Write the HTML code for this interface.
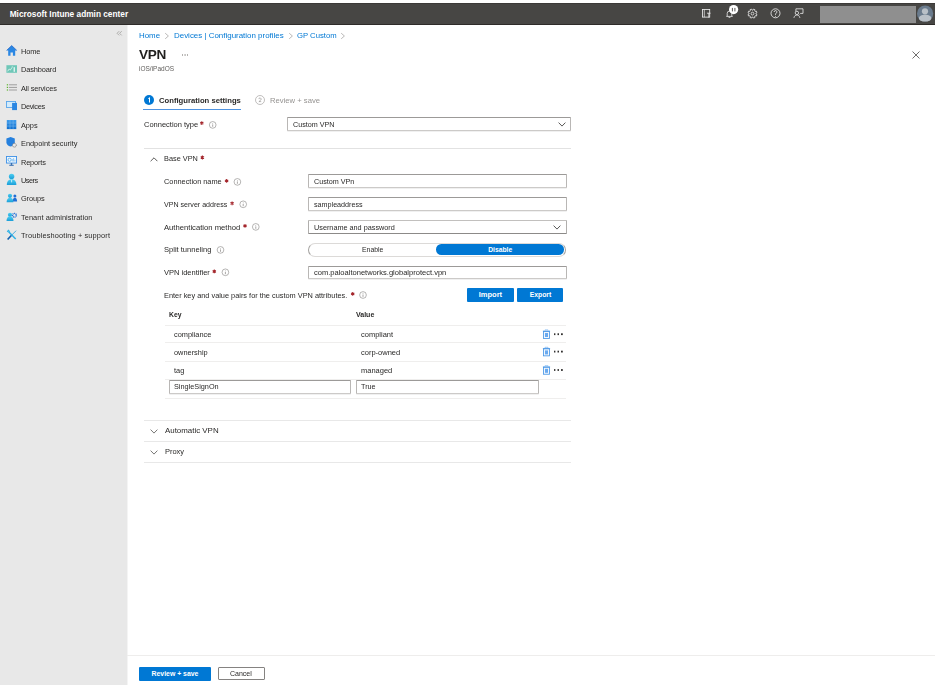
<!DOCTYPE html>
<html><head><meta charset="utf-8"><style>
html,body{margin:0;padding:0;width:940px;height:685px;overflow:hidden;background:#fff;font-family:"Liberation Sans", sans-serif;}
.t{position:absolute;white-space:nowrap;will-change:transform;}
.r{position:absolute;box-sizing:border-box;}
</style></head><body>
<div class="r" style="left:0.00px;top:3.00px;width:935.00px;height:22.00px;background:#474644;"></div>
<div class="r" style="left:0.00px;top:3.00px;width:935.00px;height:1.00px;background:#3c3a38;"></div>
<div class="r" style="left:0.00px;top:24.00px;width:935.00px;height:1.00px;background:#2e2b29;"></div>
<div class="t" style="left:9.70px;top:9.77px;font-size:8.3px;line-height:8.3px;color:#ffffff;font-weight:bold;will-change:auto;">Microsoft Intune admin center</div>
<svg class="r" style="left:690.00px;top:3.00px" width="120" height="22" viewBox="690 3 120 22"><rect x="702.5" y="9.5" width="7.2" height="7.6" fill="none" stroke="#ececec" stroke-width="0.85"/><path d="M704.3 9.5v7.6" stroke="#ececec" stroke-width="0.7"/><path d="M707 13.2h3.6M708.8 13.2v4.4" fill="none" stroke="#ececec" stroke-width="0.8"/><path d="M726.3 16.4h6.4M727.2 16.4v-3a2.3 2.3 0 0 1 4.6 0v3M728.6 17.4h1.8" fill="none" stroke="#ececec" stroke-width="0.8"/><circle cx="733.6" cy="9.6" r="4.6" fill="#ffffff"/><path d="M732.4 7.9v3.5M734.9 7.9v3.5" stroke="#5a5856" stroke-width="1"/><path d="M755.89 13.91 L756.99 14.62 L756.39 16.05 L755.12 15.77 L754.67 16.22 L754.95 17.49 L753.52 18.09 L752.81 16.99 L752.19 16.99 L751.48 18.09 L750.05 17.49 L750.33 16.22 L749.88 15.77 L748.61 16.05 L748.01 14.62 L749.11 13.91 L749.11 13.29 L748.01 12.58 L748.61 11.15 L749.88 11.43 L750.33 10.98 L750.05 9.71 L751.48 9.11 L752.19 10.21 L752.81 10.21 L753.52 9.11 L754.95 9.71 L754.67 10.98 L755.12 11.43 L756.39 11.15 L756.99 12.58 L755.89 13.29Z" fill="none" stroke="#ececec" stroke-width="0.8"/><circle cx="752.5" cy="13.6" r="1.4" fill="none" stroke="#ececec" stroke-width="0.8"/><circle cx="775.5" cy="13.3" r="4.5" fill="none" stroke="#ececec" stroke-width="0.85"/><path d="M774.1 12.0a1.4 1.4 0 1 1 1.9 1.3c-.4.2-.5.4-.5.8v0.8" fill="none" stroke="#ececec" stroke-width="0.85"/><circle cx="775.5" cy="16.2" r="0.5" fill="#ececec"/><path d="M795.9 11.6V8.8h7.1v4.6h-2.4l-1 1" fill="none" stroke="#ececec" stroke-width="0.8"/><circle cx="796.9" cy="12.9" r="1.7" fill="#474644" stroke="#ececec" stroke-width="0.8"/><path d="M793.9 17.9c.4-1.9 1.5-2.9 3-2.9s2.6 1 3 2.9" fill="none" stroke="#ececec" stroke-width="0.8"/></svg>
<div class="r" style="left:820.00px;top:5.80px;width:96.00px;height:17.40px;background:#8f8f8f;"></div>
<svg class="r" style="left:915.00px;top:3.00px" width="20" height="22" viewBox="915 3 20 22"><circle cx="925.1" cy="13.5" r="8.1" fill="#6a7b8d"/><circle cx="925" cy="11.3" r="3.1" fill="#b9c0c7"/><path d="M918.9 18.2c0-2.1 2.6-3.5 6.2-3.5s6.2 1.4 6.2 3.5c0 1.9-2.6 3.4-6.2 3.4s-6.2-1.5-6.2-3.4z" fill="#b9c0c7"/></svg>
<div class="r" style="left:0.00px;top:25.00px;width:127.00px;height:660.00px;background:#e8e8e8;"></div>
<div class="r" style="left:127.00px;top:25.00px;width:1.00px;height:660.00px;background:#f4f4f4;"></div>
<svg class="r" style="left:114.00px;top:28.00px" width="12" height="10" viewBox="114 28 12 10"><path d="M119.2 31.2l-2.1 2.1 2.1 2.1M121.7 31.2l-2.1 2.1 2.1 2.1" fill="none" stroke="#9a9896" stroke-width="0.75"/></svg>
<div class="t" style="left:20.70px;top:47.74px;font-size:7.4px;line-height:7.4px;color:#2a2928;font-weight:normal;letter-spacing:-0.146px;">Home</div>
<div class="t" style="left:20.70px;top:66.20px;font-size:7.4px;line-height:7.4px;color:#2a2928;font-weight:normal;letter-spacing:-0.113px;">Dashboard</div>
<div class="t" style="left:20.70px;top:84.66px;font-size:7.4px;line-height:7.4px;color:#2a2928;font-weight:normal;letter-spacing:-0.138px;">All services</div>
<div class="t" style="left:20.70px;top:103.12px;font-size:7.4px;line-height:7.4px;color:#2a2928;font-weight:normal;letter-spacing:-0.353px;">Devices</div>
<div class="t" style="left:20.70px;top:121.58px;font-size:7.4px;line-height:7.4px;color:#2a2928;font-weight:normal;letter-spacing:-0.089px;">Apps</div>
<div class="t" style="left:20.70px;top:140.04px;font-size:7.4px;line-height:7.4px;color:#2a2928;font-weight:normal;letter-spacing:-0.017px;">Endpoint security</div>
<div class="t" style="left:20.70px;top:158.50px;font-size:7.4px;line-height:7.4px;color:#2a2928;font-weight:normal;letter-spacing:-0.168px;">Reports</div>
<div class="t" style="left:20.70px;top:176.96px;font-size:7.4px;line-height:7.4px;color:#2a2928;font-weight:normal;letter-spacing:-0.506px;">Users</div>
<div class="t" style="left:20.70px;top:195.42px;font-size:7.4px;line-height:7.4px;color:#2a2928;font-weight:normal;letter-spacing:-0.133px;">Groups</div>
<div class="t" style="left:20.70px;top:213.88px;font-size:7.4px;line-height:7.4px;color:#2a2928;font-weight:normal;letter-spacing:0.058px;">Tenant administration</div>
<div class="t" style="left:20.70px;top:232.34px;font-size:7.4px;line-height:7.4px;color:#2a2928;font-weight:normal;letter-spacing:0.133px;">Troubleshooting + support</div>
<svg class="r" style="left:0.00px;top:40.00px" width="20" height="210" viewBox="0 40 20 210"><path d="M11.7 45.6L6.6 50.4h1.6v5.4h2.3v-3.3h2.4v3.3h2.3v-5.4h1.6z" fill="#2b87e3"/><path d="M6.6 50.4L11.7 45.6 16.8 50.4" fill="none" stroke="#1c62c4" stroke-width="0.7"/><rect x="6.4" y="65.2" width="10.6" height="7.6" fill="#6fc7b8"/><path d="M7.6 71.3l1.6-2.3 1.2 1 1.6-2.6" fill="none" stroke="#e9f7f4" stroke-width="0.8"/><rect x="13.6" y="67.2" width="1.3" height="4.6" fill="#e9f7f4"/><rect x="11.8" y="66.4" width="0.9" height="0.9" fill="#e9f7f4"/><rect x="8.8" y="84.3" width="8.2" height="1" fill="#9e9e9e"/><rect x="8.8" y="86.9" width="8.2" height="1" fill="#9e9e9e"/><rect x="8.8" y="89.5" width="8.2" height="1" fill="#9e9e9e"/><rect x="6.8" y="84.2" width="1.2" height="1.2" fill="#5cb82e"/><rect x="6.8" y="86.8" width="1.2" height="1.2" fill="#5cb82e"/><rect x="6.8" y="89.4" width="1.2" height="1.2" fill="#5cb82e"/><rect x="6.45" y="101.45" width="9.1" height="6.1" fill="#d3ebfb" stroke="#58a6ec" stroke-width="0.9"/><rect x="12.1" y="102.9" width="4.9" height="7.2" fill="#2a86e2"/><defs><linearGradient id="ga" x1="0" y1="0" x2="0" y2="1"><stop offset="0" stop-color="#3f9cec"/><stop offset="1" stop-color="#0f6fcf"/></linearGradient><linearGradient id="gu" x1="0" y1="0" x2="0" y2="1"><stop offset="0" stop-color="#4fd0f2"/><stop offset="1" stop-color="#1b9ed8"/></linearGradient></defs><rect x="6.8" y="120" width="9.5" height="9.1" fill="url(#ga)"/><path d="M9.97 120v9.1M13.13 120v9.1M6.8 123.03h9.5M6.8 126.07h9.5" stroke="#8cc2f0" stroke-width="0.45"/><path d="M10.6 137.1L6.4 138.6v3.6c0 2.4 1.7 3.8 4.2 4.4 2.5-.6 4.2-2 4.2-4.4v-3.6z" fill="#2580de"/><circle cx="14.4" cy="145.2" r="1.9" fill="#e8e8e8" stroke="#767676" stroke-width="0.9" stroke-dasharray="0.9 0.4"/><rect x="6.45" y="156.45" width="10.1" height="6.6" fill="#eef7fd" stroke="#3d90e6" stroke-width="0.9"/><circle cx="9.6" cy="159.8" r="1.6" fill="none" stroke="#5aaef0" stroke-width="0.9"/><path d="M12.3 161.5v-2.5M13.6 161.5v-3.4M14.9 161.5v-1.8" stroke="#7cbdf2" stroke-width="0.8"/><path d="M11.5 163.2v1.6" stroke="#1b5ca8" stroke-width="1.4"/><path d="M9.3 165.3h4.4" stroke="#1b5ca8" stroke-width="0.9"/><circle cx="11.6" cy="176.4" r="2.7" fill="url(#gu)"/><path d="M6.8 185c0-3.6 2.1-5.7 4.8-5.7s4.8 2.1 4.8 5.7z" fill="url(#gu)"/><path d="M11.6 179.8v2.6" stroke="#e6f6fc" stroke-width="0.8"/><circle cx="17.2" cy="196" r="0" fill="none"/><circle cx="14.9" cy="195.9" r="1.5" fill="#1f6fd6"/><path d="M12.6 201.6c0-2.4 1-3.9 2.3-3.9s2.2 1.5 2.2 3.9z" fill="#1f6fd6"/><circle cx="10" cy="195.8" r="2.1" fill="url(#gu)"/><path d="M6.6 202.2c0-2.8 1.5-4.4 3.4-4.4s3.4 1.6 3.4 4.4z" fill="url(#gu)"/><circle cx="14.4" cy="215.3" r="1.9" fill="none" stroke="#2070d8" stroke-width="1.4" stroke-dasharray="1 0.55"/><circle cx="10" cy="214.8" r="2.1" fill="url(#gu)"/><path d="M6.5 220.9c0-2.8 1.6-4.6 3.5-4.6s3.5 1.8 3.5 4.6z" fill="url(#gu)"/><path d="M8.4 231.4l7.3 7.6" stroke="#2fb2e6" stroke-width="1.5"/><path d="M7.2 231.8l1.2-1.4 1.4 1.2" fill="none" stroke="#2fb2e6" stroke-width="1.1"/><path d="M16.1 230.7l-5 5" stroke="#35a6df" stroke-width="0.9"/><path d="M11.3 235.5L7.6 239.5" stroke="#1160b0" stroke-width="1.7"/></svg>
<div class="t" style="left:138.90px;top:32.11px;font-size:7.9px;line-height:7.9px;color:#0078d4;font-weight:normal;">Home</div>
<div class="t" style="left:173.50px;top:32.07px;font-size:7.95px;line-height:7.95px;color:#0078d4;font-weight:normal;">Devices | Configuration profiles</div>
<div class="t" style="left:296.60px;top:32.28px;font-size:7.7px;line-height:7.7px;color:#0078d4;font-weight:normal;">GP Custom</div>
<svg class="r" style="left:164.30px;top:32.00px" width="6" height="8" viewBox="0 0 6 8"><path d="M1.2 1.2L4.4 4 1.2 6.8" fill="none" stroke="#a8a6a4" stroke-width="0.8"/></svg>
<svg class="r" style="left:288.30px;top:32.00px" width="6" height="8" viewBox="0 0 6 8"><path d="M1.2 1.2L4.4 4 1.2 6.8" fill="none" stroke="#a8a6a4" stroke-width="0.8"/></svg>
<svg class="r" style="left:340.30px;top:32.00px" width="6" height="8" viewBox="0 0 6 8"><path d="M1.2 1.2L4.4 4 1.2 6.8" fill="none" stroke="#a8a6a4" stroke-width="0.8"/></svg>
<div class="t" style="left:139.20px;top:48.09px;font-size:13.6px;line-height:13.6px;color:#201f1e;font-weight:bold;letter-spacing:-0.3px;">VPN</div>
<svg class="r" style="left:181.00px;top:53.00px" width="8" height="4" viewBox="0 0 8 4"><rect x="1" y="1" width="1" height="2" fill="#b4b2b0"/><rect x="3.3" y="1" width="1.6" height="2" fill="#c4c2c0"/><rect x="6" y="1" width="1" height="2" fill="#b4b2b0"/></svg>
<div class="t" style="left:139.00px;top:65.50px;font-size:6.5px;line-height:6.5px;color:#605e5c;font-weight:normal;">iOS/iPadOS</div>
<svg class="r" style="left:143.60px;top:95.30px" width="10" height="10" viewBox="0 0 10 10"><circle cx="5" cy="5" r="5" fill="#0078d4"/><path d="M4.3 3.6l1.2-.9v4.8" fill="none" stroke="#fff" stroke-width="1"/></svg>
<div class="t" style="left:158.80px;top:96.50px;font-size:7.68px;line-height:7.68px;color:#2a2928;font-weight:bold;">Configuration settings</div>
<div class="r" style="left:143.00px;top:108.70px;width:98.00px;height:1.50px;background:#4f93e0;"></div>
<svg class="r" style="left:254.70px;top:95.30px" width="10" height="10" viewBox="0 0 10 10"><circle cx="5" cy="5" r="4.5" fill="none" stroke="#a6a4a2" stroke-width="0.7"/><path d="M3.9 4.1a1.15 1.15 0 1 1 1.9 .9L3.9 6.6h2.3" fill="none" stroke="#8d8b89" stroke-width="0.6"/></svg>
<div class="t" style="left:270.00px;top:96.82px;font-size:7.66px;line-height:7.66px;color:#959391;font-weight:normal;">Review + save</div>
<div class="t" style="left:143.50px;top:120.95px;font-size:7.5px;line-height:7.5px;color:#2a2928;font-weight:normal;">Connection type</div>
<div class="r" style="left:287.20px;top:117.20px;width:283.60px;height:13.80px;border:1px solid #b9b7b5;border-top-color:#9c9a98;border-bottom-color:#cccac8;border-radius:1px;background:#fff;box-shadow:0 0.8px 0 #ececec;"></div>
<div class="t" style="left:292.80px;top:122.22px;font-size:7.18px;line-height:7.18px;color:#2a2928;font-weight:normal;">Custom VPN</div>
<svg class="r" style="left:558.00px;top:121.80px" width="8" height="5" viewBox="0 0 8 5"><path d="M0.6 0.6L4 4.1 7.4 0.6" fill="none" stroke="#3b3a39" stroke-width="0.85"/></svg>
<div class="r" style="left:143.50px;top:148.00px;width:427.50px;height:1.00px;background:#e2e2e2;"></div>
<svg class="r" style="left:150.00px;top:157.00px" width="8" height="5" viewBox="0 0 8 5"><path d="M0.6 4.2L4 0.8 7.4 4.2" fill="none" stroke="#323130" stroke-width="0.8"/></svg>
<div class="t" style="left:164.40px;top:155.00px;font-size:7.33px;line-height:7.33px;color:#2a2928;font-weight:normal;">Base VPN</div>
<div class="t" style="left:164.40px;top:177.76px;font-size:7.37px;line-height:7.37px;color:#2a2928;font-weight:normal;">Connection name</div>
<div class="r" style="left:308.20px;top:174.30px;width:258.60px;height:14.00px;border:1px solid #b9b7b5;border-top-color:#9c9a98;border-bottom-color:#cccac8;border-radius:1px;background:#fff;box-shadow:0 0.8px 0 #ececec;"></div>
<div class="t" style="left:313.50px;top:178.11px;font-size:7.2px;line-height:7.2px;color:#2a2928;font-weight:normal;">Custom VPn</div>
<div class="t" style="left:164.40px;top:202.00px;font-size:7.09px;line-height:7.09px;color:#2a2928;font-weight:normal;">VPN server address</div>
<div class="r" style="left:308.20px;top:197.40px;width:258.60px;height:14.00px;border:1px solid #b9b7b5;border-top-color:#9c9a98;border-bottom-color:#cccac8;border-radius:1px;background:#fff;box-shadow:0 0.8px 0 #ececec;"></div>
<div class="t" style="left:313.50px;top:201.92px;font-size:7.18px;line-height:7.18px;color:#2a2928;font-weight:normal;">sampleaddress</div>
<div class="t" style="left:164.40px;top:223.52px;font-size:7.66px;line-height:7.66px;color:#2a2928;font-weight:normal;">Authentication method</div>
<div class="r" style="left:308.20px;top:220.30px;width:258.40px;height:13.60px;border:1px solid #b0aeac;border-top-color:#c2c0be;border-bottom-color:#8c8a88;border-radius:1px;background:#fff;"></div>
<div class="t" style="left:313.60px;top:223.84px;font-size:7.28px;line-height:7.28px;color:#2a2928;font-weight:normal;">Username and password</div>
<svg class="r" style="left:553.20px;top:224.70px" width="8" height="5" viewBox="0 0 8 5"><path d="M0.6 0.6L4 4.1 7.4 0.6" fill="none" stroke="#3b3a39" stroke-width="0.85"/></svg>
<div class="t" style="left:164.40px;top:246.40px;font-size:7.56px;line-height:7.56px;color:#2a2928;font-weight:normal;">Split tunneling</div>
<div class="r" style="left:308.00px;top:242.80px;width:257.80px;height:14.10px;border:1.2px solid #dcdad8;border-left-color:#a3a19f;border-right-color:#a3a19f;border-radius:7.2px;background:#fff;"></div>
<div class="r" style="left:436.40px;top:244.20px;width:127.80px;height:10.50px;background:#0078d4;border-radius:5.3px;"></div>
<div class="t" style="left:361.90px;top:246.58px;font-size:6.87px;line-height:6.87px;color:#2a2928;font-weight:normal;">Enable</div>
<div class="t" style="left:488.20px;top:246.89px;font-size:6.75px;line-height:6.75px;color:#fff;font-weight:bold;will-change:auto;">Disable</div>
<div class="t" style="left:164.40px;top:268.74px;font-size:7.51px;line-height:7.51px;color:#2a2928;font-weight:normal;">VPN identifier</div>
<div class="r" style="left:308.20px;top:265.50px;width:258.40px;height:13.30px;border:1px solid #b9b7b5;border-top-color:#9c9a98;border-bottom-color:#cccac8;border-radius:1px;background:#fff;box-shadow:0 0.8px 0 #ececec;"></div>
<div class="t" style="left:313.60px;top:269.12px;font-size:7.54px;line-height:7.54px;color:#2a2928;font-weight:normal;">com.paloaltonetworks.globalprotect.vpn</div>
<div class="t" style="left:164.40px;top:291.56px;font-size:7.37px;line-height:7.37px;color:#2a2928;font-weight:normal;">Enter key and value pairs for the custom VPN attributes.</div>
<div class="r" style="left:466.70px;top:288.10px;width:47.60px;height:13.60px;background:#0078d4;border-radius:1px;"></div>
<div class="r" style="left:517.30px;top:288.10px;width:46.10px;height:13.60px;background:#0078d4;border-radius:1px;"></div>
<div class="t" style="left:478.70px;top:291.23px;font-size:7.52px;line-height:7.52px;color:#fff;font-weight:bold;will-change:auto;">Import</div>
<div class="t" style="left:529.70px;top:291.83px;font-size:6.82px;line-height:6.82px;color:#fff;font-weight:bold;will-change:auto;">Export</div>
<div class="t" style="left:169.40px;top:311.84px;font-size:6.8px;line-height:6.8px;color:#2a2928;font-weight:bold;">Key</div>
<div class="t" style="left:356.20px;top:310.97px;font-size:7.0px;line-height:7.0px;color:#2a2928;font-weight:bold;">Value</div>
<div class="r" style="left:164.60px;top:325.00px;width:401.40px;height:1.00px;background:#efeeed;"></div>
<div class="r" style="left:164.60px;top:342.00px;width:401.40px;height:1.00px;background:#efeeed;"></div>
<div class="r" style="left:164.60px;top:361.00px;width:401.40px;height:1.00px;background:#efeeed;"></div>
<div class="r" style="left:164.60px;top:379.00px;width:401.40px;height:1.00px;background:#efeeed;"></div>
<div class="r" style="left:164.60px;top:398.00px;width:401.40px;height:1.00px;background:#efeeed;"></div>
<div class="t" style="left:173.80px;top:330.74px;font-size:7.39px;line-height:7.39px;color:#2a2928;font-weight:normal;">compliance</div>
<div class="t" style="left:361.00px;top:330.65px;font-size:7.5px;line-height:7.5px;color:#2a2928;font-weight:normal;">compliant</div>
<div class="t" style="left:173.80px;top:348.74px;font-size:7.39px;line-height:7.39px;color:#2a2928;font-weight:normal;">ownership</div>
<div class="t" style="left:361.00px;top:348.65px;font-size:7.5px;line-height:7.5px;color:#2a2928;font-weight:normal;">corp-owned</div>
<div class="t" style="left:173.80px;top:367.34px;font-size:7.39px;line-height:7.39px;color:#2a2928;font-weight:normal;">tag</div>
<div class="t" style="left:361.00px;top:367.25px;font-size:7.5px;line-height:7.5px;color:#2a2928;font-weight:normal;">managed</div>
<svg class="r" style="left:540.00px;top:320.00px" width="30" height="60" viewBox="540 320 30 60"><g transform="translate(542 329.00)"><rect x="1.45" y="2.45" width="6.1" height="7" fill="#f2f7fd" stroke="#4a97e6" stroke-width="0.85"/><rect x="3" y="4" width="3" height="4" fill="#6aaaf0"/><path d="M0.9 2.1h7.2" stroke="#4a97e6" stroke-width="0.8"/><path d="M3 1.6V0.9h3v.7" fill="none" stroke="#7ab4f0" stroke-width="0.7"/></g><g transform="translate(553 332.10)"><rect x="1" y="1.2" width="1.4" height="1.8" fill="#323130"/><rect x="4.5" y="1.2" width="1.5" height="1.8" fill="#323130"/><rect x="8" y="1.2" width="1.8" height="1.8" fill="#323130"/></g><g transform="translate(542 346.40)"><rect x="1.45" y="2.45" width="6.1" height="7" fill="#f2f7fd" stroke="#4a97e6" stroke-width="0.85"/><rect x="3" y="4" width="3" height="4" fill="#6aaaf0"/><path d="M0.9 2.1h7.2" stroke="#4a97e6" stroke-width="0.8"/><path d="M3 1.6V0.9h3v.7" fill="none" stroke="#7ab4f0" stroke-width="0.7"/></g><g transform="translate(553 349.50)"><rect x="1" y="1.2" width="1.4" height="1.8" fill="#323130"/><rect x="4.5" y="1.2" width="1.5" height="1.8" fill="#323130"/><rect x="8" y="1.2" width="1.8" height="1.8" fill="#323130"/></g><g transform="translate(542 364.80)"><rect x="1.45" y="2.45" width="6.1" height="7" fill="#f2f7fd" stroke="#4a97e6" stroke-width="0.85"/><rect x="3" y="4" width="3" height="4" fill="#6aaaf0"/><path d="M0.9 2.1h7.2" stroke="#4a97e6" stroke-width="0.8"/><path d="M3 1.6V0.9h3v.7" fill="none" stroke="#7ab4f0" stroke-width="0.7"/></g><g transform="translate(553 367.90)"><rect x="1" y="1.2" width="1.4" height="1.8" fill="#323130"/><rect x="4.5" y="1.2" width="1.5" height="1.8" fill="#323130"/><rect x="8" y="1.2" width="1.8" height="1.8" fill="#323130"/></g></svg>
<div class="r" style="left:169.00px;top:380.00px;width:182.40px;height:13.60px;border:1px solid #b9b7b5;border-top-color:#9c9a98;border-bottom-color:#cccac8;border-radius:1px;background:#fff;box-shadow:0 0.8px 0 #ececec;"></div>
<div class="t" style="left:173.80px;top:383.21px;font-size:7.31px;line-height:7.31px;color:#2a2928;font-weight:normal;">SingleSignOn</div>
<div class="r" style="left:356.20px;top:380.00px;width:182.50px;height:13.60px;border:1px solid #b9b7b5;border-top-color:#9c9a98;border-bottom-color:#cccac8;border-radius:1px;background:#fff;box-shadow:0 0.8px 0 #ececec;"></div>
<div class="t" style="left:361.40px;top:383.28px;font-size:7.23px;line-height:7.23px;color:#2a2928;font-weight:normal;">True</div>
<div class="r" style="left:143.70px;top:420.00px;width:427.30px;height:1.00px;background:#e8e8e8;"></div>
<svg class="r" style="left:150.00px;top:428.50px" width="8" height="5" viewBox="0 0 8 5"><path d="M0.6 0.6L4 4.1 7.4 0.6" fill="none" stroke="#605e5c" stroke-width="0.85"/></svg>
<div class="t" style="left:164.50px;top:427.00px;font-size:7.92px;line-height:7.92px;color:#2a2928;font-weight:normal;">Automatic VPN</div>
<div class="r" style="left:143.70px;top:441.00px;width:427.30px;height:1.00px;background:#e8e8e8;"></div>
<svg class="r" style="left:150.00px;top:449.50px" width="8" height="5" viewBox="0 0 8 5"><path d="M0.6 0.6L4 4.1 7.4 0.6" fill="none" stroke="#605e5c" stroke-width="0.85"/></svg>
<div class="t" style="left:164.50px;top:447.78px;font-size:7.47px;line-height:7.47px;color:#2a2928;font-weight:normal;">Proxy</div>
<div class="r" style="left:143.70px;top:462.00px;width:427.30px;height:1.00px;background:#e8e8e8;"></div>
<svg class="r" style="left:912.00px;top:51.00px" width="8" height="8" viewBox="0 0 8 8"><path d="M0.5 0.5l7 7M7.5 0.5l-7 7" stroke="#605e5c" stroke-width="0.9"/></svg>
<div class="r" style="left:127.00px;top:655.00px;width:808.00px;height:1.00px;background:#eeedec;"></div>
<div class="r" style="left:139.10px;top:667.00px;width:72.30px;height:13.60px;background:#0078d4;border-radius:1px;"></div>
<div class="t" style="left:151.50px;top:670.56px;font-size:6.9px;line-height:6.9px;color:#fff;font-weight:bold;will-change:auto;">Review + save</div>
<div class="r" style="left:218.00px;top:667.20px;width:46.80px;height:13.30px;border:1px solid #858381;border-radius:1px;background:#fff;"></div>
<div class="t" style="left:230.20px;top:670.47px;font-size:7.0px;line-height:7.0px;color:#2a2928;font-weight:normal;">Cancel</div>
<svg class="r" style="left:130.00px;top:110.00px" width="460" height="200" viewBox="130 110 460 200"><path d="M201.80 121.20v3.8M200.15 122.15l3.3 1.9M200.15 124.05l3.3-1.9" stroke="#a4262c" stroke-width="1.05"/><circle cx="212.70" cy="124.90" r="3.35" fill="none" stroke="#858381" stroke-width="0.6"/><path d="M212.70 124.40v2.4" stroke="#858381" stroke-width="0.7"/><circle cx="212.70" cy="123.40" r="0.4" fill="#858381"/><path d="M202.40 155.60v3.8M200.75 156.55l3.3 1.9M200.75 158.45l3.3-1.9" stroke="#a4262c" stroke-width="1.05"/><path d="M226.60 179.00v3.8M224.95 179.95l3.3 1.9M224.95 181.85l3.3-1.9" stroke="#a4262c" stroke-width="1.05"/><circle cx="237.40" cy="181.90" r="3.35" fill="none" stroke="#858381" stroke-width="0.6"/><path d="M237.40 181.40v2.4" stroke="#858381" stroke-width="0.7"/><circle cx="237.40" cy="180.40" r="0.4" fill="#858381"/><path d="M232.10 201.40v3.8M230.45 202.35l3.3 1.9M230.45 204.25l3.3-1.9" stroke="#a4262c" stroke-width="1.05"/><circle cx="243.20" cy="204.30" r="3.35" fill="none" stroke="#858381" stroke-width="0.6"/><path d="M243.20 203.80v2.4" stroke="#858381" stroke-width="0.7"/><circle cx="243.20" cy="202.80" r="0.4" fill="#858381"/><path d="M245.00 224.00v3.8M243.35 224.95l3.3 1.9M243.35 226.85l3.3-1.9" stroke="#a4262c" stroke-width="1.05"/><circle cx="255.80" cy="226.90" r="3.35" fill="none" stroke="#858381" stroke-width="0.6"/><path d="M255.80 226.40v2.4" stroke="#858381" stroke-width="0.7"/><circle cx="255.80" cy="225.40" r="0.4" fill="#858381"/><circle cx="220.50" cy="249.90" r="3.35" fill="none" stroke="#858381" stroke-width="0.6"/><path d="M220.50 249.40v2.4" stroke="#858381" stroke-width="0.7"/><circle cx="220.50" cy="248.40" r="0.4" fill="#858381"/><path d="M214.30 269.50v3.8M212.65 270.45l3.3 1.9M212.65 272.35l3.3-1.9" stroke="#a4262c" stroke-width="1.05"/><circle cx="225.40" cy="272.30" r="3.35" fill="none" stroke="#858381" stroke-width="0.6"/><path d="M225.40 271.80v2.4" stroke="#858381" stroke-width="0.7"/><circle cx="225.40" cy="270.80" r="0.4" fill="#858381"/><path d="M352.70 292.00v3.8M351.05 292.95l3.3 1.9M351.05 294.85l3.3-1.9" stroke="#a4262c" stroke-width="1.05"/><circle cx="363.00" cy="295.00" r="3.35" fill="none" stroke="#858381" stroke-width="0.6"/><path d="M363.00 294.50v2.4" stroke="#858381" stroke-width="0.7"/><circle cx="363.00" cy="293.50" r="0.4" fill="#858381"/></svg>
</body></html>
